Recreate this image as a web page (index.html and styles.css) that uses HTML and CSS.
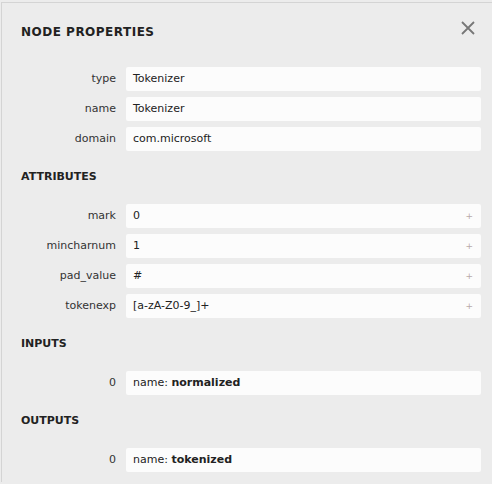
FILE: index.html
```html
<!DOCTYPE html>
<html>
<head>
<meta charset="utf-8">
<link rel="stylesheet" href="styles.css">
</head>
<body>
<div class="panel">
  <div class="title-bar">
    <div class="title">NODE PROPERTIES</div>
    <svg class="close" width="14" height="14" viewBox="0 0 14 14">
      <path d="M1 1 L13 13 M13 1 L1 13" stroke="#777" stroke-width="1.8" fill="none"/>
    </svg>
  </div>

  <div class="rows first">
    <div class="row"><div class="label">type</div><div class="value">Tokenizer</div></div>
    <div class="row"><div class="label">name</div><div class="value">Tokenizer</div></div>
    <div class="row"><div class="label">domain</div><div class="value">com.microsoft</div></div>
  </div>

  <div class="header">ATTRIBUTES</div>
  <div class="rows">
    <div class="row"><div class="label">mark</div><div class="value"><span>0</span><span class="expander">+</span></div></div>
    <div class="row"><div class="label">mincharnum</div><div class="value"><span>1</span><span class="expander">+</span></div></div>
    <div class="row"><div class="label">pad_value</div><div class="value"><span>#</span><span class="expander">+</span></div></div>
    <div class="row"><div class="label">tokenexp</div><div class="value"><span>[a-zA-Z0-9_]+</span><span class="expander">+</span></div></div>
  </div>

  <div class="header">INPUTS</div>
  <div class="rows">
    <div class="row"><div class="label">0</div><div class="value"><span>name: <b>normalized</b></span></div></div>
  </div>

  <div class="header">OUTPUTS</div>
  <div class="rows">
    <div class="row"><div class="label">0</div><div class="value"><span>name: <b>tokenized</b></span></div></div>
  </div>
</div>
</body>
</html>
```

FILE: styles.css
```css
html, body {
  margin: 0;
  padding: 0;
  background: #ececec;
}
body {
  padding: 2px 0 0 1px;
  font-family: "DejaVu Sans", sans-serif;
  color: #333;
  height: 482px;
  box-sizing: border-box;
  overflow: hidden;
}
.panel {
  border-top: 1px solid #d4d4d4;
  border-left: 1px solid #d4d4d4;
  background: #ececec;
  height: 100%;
  box-sizing: border-box;
}
.title-bar {
  display: flex;
  align-items: flex-start;
  justify-content: space-between;
  padding: 19px 17px 0 19px;
}
.title {
  font-size: 12px;
  font-weight: bold;
  letter-spacing: 0.5px;
  line-height: 20px;
  height: 20px;
  color: #222;
}
.close {
  display: block;
  margin-top: -1px;
}
.rows {
  display: flex;
  flex-direction: column;
  gap: 6px;
  padding: 0 11px 0 19px;
}
.rows.first {
  margin-top: 25px;
}
.row {
  display: flex;
  align-items: center;
  height: 24px;
}
.label {
  width: 95px;
  margin-right: 10px;
  text-align: right;
  font-size: 11px;
  line-height: 24px;
  color: #333;
  flex: none;
}
.value {
  flex: 1;
  display: flex;
  align-items: center;
  height: 24px;
  line-height: 24px;
  background: #fcfcfc;
  border-radius: 2px;
  padding: 0 8px 0 7px;
  font-size: 11px;
  color: #222;
}
.value b {
  font-weight: bold;
  color: #222;
}
.expander {
  margin-left: auto;
  font-size: 9px;
  color: #b8aaaa;
}
.header {
  margin: 19px 0 20px 0;
  padding-left: 19px;
  font-size: 11px;
  font-weight: bold;
  line-height: 14px;
  color: #222;
}
```
